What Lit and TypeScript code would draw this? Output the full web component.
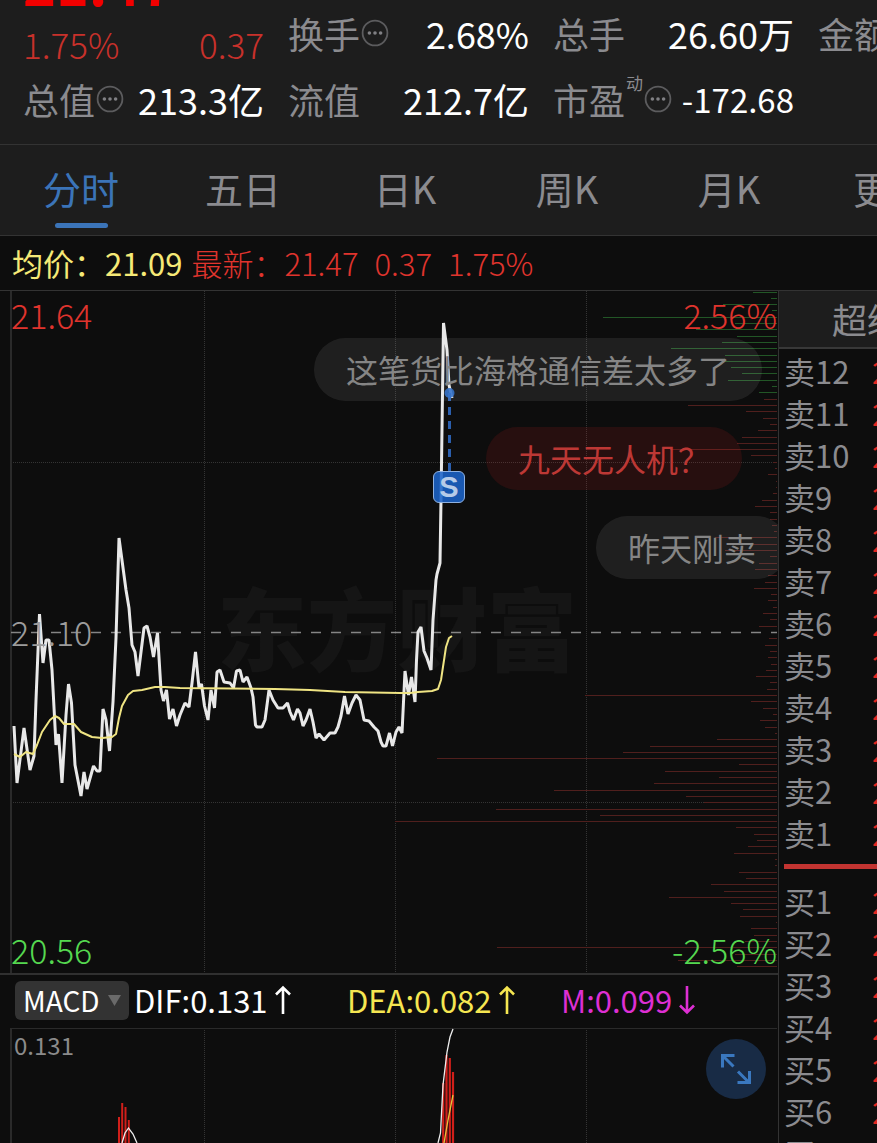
import { LitElement, html, svg, css } from "lit";
import { customElement, property, state } from "lit/decorators.js";
import { classMap } from "lit/directives/class-map.js";

type Point = [number, number];

const PRICE: Point[] = [
  [14, 726], [17, 783], [24, 728], [30, 770], [34, 756], [36, 700], [39.5, 614], [43, 663], [46, 640], [49, 640],
  [52, 670], [56, 745], [58.5, 734], [62, 783], [66, 715], [68.5, 684], [71.5, 703], [75, 765], [81, 796],
  [84, 772], [87, 789], [93.5, 766], [97, 771], [100, 771], [103, 709], [106, 720], [109.5, 751], [113, 702],
  [116, 638], [119, 538], [126, 590], [129, 608], [132, 645], [135, 652], [138, 676], [141, 652], [144, 628],
  [147, 626], [150, 637], [153.5, 657], [157.5, 633], [161, 690], [163.5, 701], [166.5, 690], [169.5, 719],
  [173, 709], [176.5, 726], [180, 715], [185, 703], [189, 707], [192, 683], [195.5, 652], [199, 688],
  [201.5, 684], [204.5, 706], [208, 720], [211, 690], [214.5, 708], [217, 672], [220, 670], [224, 682],
  [230, 683], [233.5, 688], [236.5, 671], [240, 670], [243, 682], [247, 677], [251, 688], [253, 697],
  [255.5, 725], [257, 727], [262, 727], [265, 720], [269, 690], [273, 700], [278, 708], [283, 708], [287.5, 703],
  [290, 712], [293.5, 720], [297.5, 709], [300, 713], [303, 726], [306, 720], [310, 709], [313, 722], [316, 738],
  [319, 734], [324, 740], [330, 733], [335, 733], [338, 727], [341, 716], [344.5, 696], [348, 714], [352, 703],
  [356, 695], [360, 700], [362, 710], [364, 720], [369, 721], [374, 727], [378, 731], [381, 742], [383, 746],
  [386, 746], [389.5, 733], [392.5, 746], [396, 732], [399, 727], [402, 733], [405, 671], [408.5, 695],
  [411.5, 677], [415, 702], [416.5, 660], [418, 632], [421, 627], [424, 651], [427, 658], [431, 670], [433, 620],
  [436, 580], [437, 574], [440, 563], [441, 500], [443.5, 323], [447, 350], [449, 385], [452, 398],
];

const AVERAGE: Point[] = [
  [14, 754], [20, 757], [26, 752], [33, 754], [37, 745], [42, 732], [50, 720], [55, 716], [59, 718], [64, 724],
  [74, 724], [81, 732], [92, 737], [102, 738], [112, 737], [116, 734], [119, 718], [122, 706], [128, 695],
  [133, 691], [142, 690], [155, 687], [165, 687], [180, 688], [275, 689], [310, 690], [345, 692], [400, 693],
  [410, 693], [418, 692], [432, 691], [438, 689], [441, 680], [446, 647], [449, 638], [452, 636],
];

/* Traded volume per price level, from the top of the chart down, as bar lengths. */
const VOLUME = [
  24, 6, 54, 5, 174, 42, 81, 40, 55, 106, 52, 52, 46, 35, 49, 5, 18, 13, 89, 31, 14, 7, 19, 35, 40, 107, 26, 4, 2, 9,
  1, 1, 4, 15, 22, 7, 7, 5, 3, 62, 37, 52, 7, 18, 22, 9, 12, 23, 6, 9, 4, 14, 7, 18, 5, 8, 12, 7, 9, 6, 11, 21, 7,
  10, 192, 26, 14, 4, 17, 12, 2, 60, 127, 154, 340, 38, 112, 58, 123, 223, 91, 73, 281, 177, 382, 41, 23, 20, 29,
  43, 2, 2, 38, 31, 66, 53, 108, 46, 34, 37, 1, 26, 23, 32, 280, 42, 99, 40, 81,
];
const GREEN_LEVELS = 17;

const path = (points: Point[]) => points.map((p) => p.join(",")).join(" ");

const infoIcon = html`<svg class="info" viewBox="0 0 28 28" aria-hidden="true">
  <circle cx="14" cy="14" r="12.4" fill="none" stroke="#5c5c5e" stroke-width="1.8" />
  <g fill="#808084"><circle cx="8.4" cy="14" r="1.8" /><circle cx="14" cy="14" r="1.8" /><circle cx="19.6" cy="14" r="1.8" /></g>
</svg>`;

@customElement("quote-header")
class QuoteHeader extends LitElement {
  static styles = css`
    :host {
      display: block;
      overflow: hidden;
      background: #1d1d1d;
      border-bottom: 1px solid #333;
    }
    .grid {
      display: grid;
      grid-template-columns: repeat(4, 241px);
      grid-template-rows: 67px 65px;
      column-gap: 24px;
      padding: 0 23px 12px;
    }
    .cell {
      display: flex;
      align-items: center;
      justify-content: space-between;
      padding-bottom: 2px;
      font-size: 36px;
      line-height: 48px;
      color: #fff;
      white-space: nowrap;
    }
    .label {
      display: flex;
      align-items: center;
      gap: 1px;
      color: #8b8b8f;
    }
    .last {
      display: flex;
      flex-direction: column;
      justify-content: flex-end;
      height: 67px;
      color: #c8312b;
    }
    .price {
      font-size: 56px;
      line-height: 78px;
      font-weight: 700;
      color: #f20000;
    }
    .change {
      display: flex;
      justify-content: space-between;
      font-size: 35px;
      line-height: 46px;
      font-weight: 300;
    }
    .note {
      align-self: flex-start;
      font-size: 17px;
      line-height: 16px;
    }
    .info {
      width: 28px;
      height: 28px;
    }
    .minor {
      font-size: 33px;
    }
  `;

  render() {
    return html`<div class="grid">
      <div class="last">
        <div class="price">21.47</div>
        <div class="change"><span>1.75%</span><span>0.37</span></div>
      </div>
      <div class="cell"><span class="label">换手${infoIcon}</span><span>2.68%</span></div>
      <div class="cell"><span class="label">总手</span><span>26.60万</span></div>
      <div class="cell"><span class="label">金额</span></div>
      <div class="cell"><span class="label">总值${infoIcon}</span><span>213.3亿</span></div>
      <div class="cell"><span class="label">流值</span><span>212.7亿</span></div>
      <div class="cell">
        <span class="label">市盈<span class="note">动</span>${infoIcon}</span><span class="minor">-172.68</span>
      </div>
    </div>`;
  }
}

@customElement("period-tabs")
class PeriodTabs extends LitElement {
  @state() active = 0;

  static styles = css`
    :host {
      display: block;
      overflow: hidden;
      background: #1d1d1d;
      border-bottom: 1px solid #333;
    }
    .tabs {
      display: flex;
    }
    .tab {
      flex: 0 0 162px;
      display: flex;
      flex-direction: column;
      align-items: center;
      height: 90px;
      padding: 15px 0 0;
      border: 0;
      background: none;
      font: inherit;
      font-size: 38px;
      line-height: 56px;
      color: #8b8b8f;
    }
    .tab::after {
      content: "";
      width: 53px;
      height: 5px;
      margin-top: 7px;
      border-radius: 3px;
    }
    .active {
      color: #3b74b8;
    }
    .active::after {
      background: #3b74b8;
    }
  `;

  render() {
    return html`<nav class="tabs">
      ${["分时", "五日", "日K", "周K", "月K", "更多"].map(
        (name, i) => html`<button class=${classMap({ tab: true, active: i === this.active })} @click=${() => (this.active = i)}>${name}</button>`
      )}
    </nav>`;
  }
}

@customElement("price-chart")
class PriceChart extends LitElement {
  static styles = css`
    :host {
      display: block;
      position: relative;
      overflow: hidden;
      min-height: 0;
    }
    .plot {
      position: absolute;
      inset: 0;
      width: 100%;
      height: 100%;
    }
    .plot * {
      vector-effect: non-scaling-stroke;
    }
    .watermark {
      position: absolute;
      left: 217px;
      top: 49%;
      transform: translateY(-50%);
      font-size: 90px;
      line-height: 90px;
      font-weight: 900;
      color: #151515;
      white-space: nowrap;
    }
    .scale {
      position: absolute;
      inset: 0 1px 1px 11px;
      display: grid;
      grid-template-columns: auto auto;
      grid-template-rows: 1fr auto 1fr;
      justify-content: space-between;
      font-size: 34px;
      line-height: 44px;
      font-weight: 300;
    }
    .up {
      padding-top: 2px;
      color: #e0342d;
    }
    .mid {
      grid-column: 1 / 3;
      color: #9c9c9c;
    }
    .down {
      align-self: end;
      color: #55d850;
    }
    .end {
      text-align: right;
    }
    .bullet {
      position: absolute;
      padding: 0 32px;
      border-radius: 32px;
      background: rgba(255, 255, 255, 0.08);
      font-size: 32px;
      line-height: 63px;
      color: #858585;
      white-space: nowrap;
    }
    .first {
      left: 314px;
      top: 47px;
    }
    .second {
      left: 486px;
      top: 136px;
      background: rgba(255, 40, 40, 0.11);
      color: #bd3835;
    }
    .third {
      left: 596px;
      top: 225px;
    }
    .sell {
      position: absolute;
      left: 57.7%;
      top: 180px;
      width: 32px;
      height: 32px;
      margin-left: -16px;
      box-sizing: border-box;
      border: 1px solid #8fb0de;
      border-radius: 6px;
      background: rgba(27, 99, 200, 0.88);
      font: 700 29px/30px "Liberation Sans", sans-serif;
      text-align: center;
      color: #b6cbe8;
    }
  `;

  render() {
    const step = 681 / (VOLUME.length - 1);
    return html`
      <div class="watermark">东方财富</div>
      <svg class="plot" viewBox="0 291 778 682" preserveAspectRatio="none" aria-hidden="true">
        <g stroke="#343434" stroke-dasharray="1 1" fill="none">
          <path d="M204.5 291V973M395.5 291V973M586.5 291V973M11 462.500H777M11 802.5H777" />
        </g>
        <path d="M11 291V973" stroke="#2a2a2a" stroke-width="2" />
        ${VOLUME.map((length, i) => {
          const y = Math.round(291.5 + step * i) + 0.5;
          return svg`<path d=${`M${777 - length} ${y}H777`} stroke=${i < GREEN_LEVELS ? "#225626" : "#501f1d"} />`;
        })}
        <path d="M11 632.5H777" stroke="#858585" stroke-width="1.6" stroke-dasharray="10 10" />
        <polyline points=${path(PRICE)} fill="none" stroke="#e8e8e8" stroke-width="3" stroke-linejoin="bevel" />
        <polyline points=${path(AVERAGE)} fill="none" stroke="#efe483" stroke-width="2" stroke-linejoin="round" />
        <path d="M449.5 393V471" stroke="#2b5fae" stroke-width="3" stroke-dasharray="8 6" />
        <circle cx="449.5" cy="393" r="5" fill="#2668c4" fill-opacity="0.9" />
      </svg>
      <div class="scale">
        <span class="up">21.64</span><span class="up end">2.56%</span>
        <span class="mid">21.10</span>
        <span class="down">20.56</span><span class="down end">-2.56%</span>
      </div>
      <div class="bullet first">这笔货比海格通信差太多了</div>
      <div class="bullet second">九天无人机？</div>
      <div class="bullet third">昨天刚卖</div>
      <div class="sell">S</div>
    `;
  }
}

@customElement("macd-chart")
class MacdChart extends LitElement {
  static styles = css`
    :host {
      display: flex;
      flex-direction: column;
      min-height: 0;
      border-top: 2px solid #303030;
      box-sizing: border-box;
    }
    .bar {
      flex: none;
      display: grid;
      grid-template-columns: 119px 213px 214px auto;
      align-items: center;
      height: 50px;
      padding: 0 0 3px 15px;
      font-size: 31px;
      line-height: 40px;
      white-space: nowrap;
    }
    .picker {
      display: flex;
      align-items: center;
      justify-content: space-between;
      width: 114px;
      height: 39px;
      padding: 0 8px;
      border: 0;
      border-radius: 6px;
      background: #333;
      font: inherit;
      font-size: 28px;
      line-height: 36px;
      color: #fff;
    }
    .caret {
      width: 13px;
      height: 11px;
      fill: #6a6a6a;
    }
    .value {
      display: flex;
      align-items: center;
      gap: 6px;
    }
    .arrow {
      width: 18px;
      height: 30px;
      fill: none;
      stroke: currentColor;
      stroke-width: 2.6;
    }
    .dif {
      color: #fff;
    }
    .dea {
      color: #f5e651;
    }
    .m {
      color: #dd2fd3;
    }
    .area {
      flex: 1;
      position: relative;
      min-height: 0;
      overflow: hidden;
    }
    .plot {
      position: absolute;
      inset: 0;
      width: 100%;
      height: 100%;
    }
    .plot * {
      vector-effect: non-scaling-stroke;
    }
    .max {
      position: absolute;
      left: 14px;
      top: 0;
      font-size: 24px;
      line-height: 34px;
      color: #8b8b8b;
    }
    .expand {
      position: absolute;
      right: 12px;
      top: 11px;
      width: 60px;
      height: 60px;
      padding: 0;
      border: 0;
      border-radius: 50%;
      background: #182b45;
    }
    .glyph {
      display: block;
      width: 60px;
      height: 60px;
      fill: none;
      stroke: #3a78bf;
      stroke-width: 3;
    }
  `;

  private arrow(down: boolean) {
    return html`<svg class="arrow" viewBox="0 0 18 30" aria-hidden="true">
      <path d=${down ? "M9 1V28M2 20.5L9 27.5L16 20.5" : "M9 29V2M2 9.500L9 2.5L16 9.500"} />
    </svg>`;
  }

  render() {
    return html`
      <div class="bar">
        <button class="picker">MACD<svg class="caret" viewBox="0 0 13 11" aria-hidden="true"><path d="M0 0H13L6.500 11Z" /></svg></button>
        <span class="value dif">DIF:0.131${this.arrow(false)}</span>
        <span class="value dea">DEA:0.082${this.arrow(false)}</span>
        <span class="value m">M:0.099${this.arrow(true)}</span>
      </div>
      <div class="area">
        <svg class="plot" viewBox="0 1028 778 115" preserveAspectRatio="none" aria-hidden="true">
          <path d="M204.5 1028V1143M395.5 1028V1143M586.5 1028V1143" stroke="#343434" stroke-dasharray="1 1" />
          <path d="M11 1028V1143" stroke="#2a2a2a" stroke-width="2" />
          <path d="M10 1028.5H777" stroke="#2a2a2a" />
          <path d="M119 1143V1117M122.2 1143V1103M125.500 1143V1107M128.800 1143V1120" stroke="#d01f1a" stroke-width="2" />
          <path d="M443.2 1143V1083M446.500 1143V1055M449.800 1143V1058M453 1143V1072" stroke="#d01f1a" stroke-width="2.2" />
          <polyline points="122,1143 125,1133 128.500,1128 133,1134 137,1143" fill="none" stroke="#eee" stroke-width="1.300" />
          <polyline points="438,1143 440.500,1133 443,1085 447,1052 450,1037 453,1029" fill="none" stroke="#eee" stroke-width="1.300" />
          <polyline points="444,1143 448,1120 453,1095" fill="none" stroke="#e8c23c" stroke-width="1.300" />
        </svg>
        <div class="max">0.131</div>
        <button class="expand" aria-label="全屏">
          <svg class="glyph" viewBox="0 0 60 60"><path d="M28.500 16.500H16.500V28.500M17 17L27.500 27.500M32 32.500L43 43.500M43.500 32V43.500H31.500" /></svg>
        </button>
      </div>
    `;
  }
}

@customElement("order-book")
class OrderBook extends LitElement {
  static styles = css`
    :host {
      display: block;
      overflow: hidden;
      border-left: 1px solid #333;
    }
    .title {
      display: block;
      width: 176px;
      height: 56px;
      border: 0;
      border-bottom: 2px solid #383838;
      box-sizing: content-box;
      padding: 0;
      background: #1d1d1d;
      font: inherit;
      font-size: 35px;
      line-height: 52px;
      color: #8b8b8f;
    }
    .book {
      border-collapse: collapse;
      margin: 1px 0 10px 5px;
      font-size: 31px;
      line-height: 42px;
      white-space: nowrap;
    }
    .book td,
    .book th {
      padding: 0;
      height: 42px;
      text-align: left;
      font-weight: inherit;
    }
    .book th {
      min-width: 88px;
      width: 88px;
      color: #8b8b8f;
    }
    .quote {
      color: #e0251f;
    }
    .divider {
      height: 5px;
      margin: 0 0 11px 5px;
      background: #c23431;
    }
  `;

  @property({ attribute: false }) asks: string[][] = Array.from({ length: 12 }, (_, i) => [`卖${12 - i}`, (21.59 - i / 100).toFixed(2)]);
  @property({ attribute: false }) bids: string[][] = Array.from({ length: 7 }, (_, i) => [`买${i + 1}`, (21.47 - i / 100).toFixed(2)]);

  private table(rows: string[][]) {
    return html`<table class="book">
      <tbody>
        ${rows.map(([name, price]) => html`<tr><th scope="row">${name}</th><td class="quote">${price}</td></tr>`)}
      </tbody>
    </table>`;
  }

  render() {
    return html`<button class="title">超级</button>${this.table(this.asks)}
      <div class="divider"></div>
      ${this.table(this.bids)}`;
  }
}

@customElement("app-root")
class AppRoot extends LitElement {
  static styles = css`
    :host {
      display: flex;
      flex-direction: column;
      height: 100vh;
      overflow: hidden;
      background: #0d0d0d;
      font-family: "Noto Sans CJK SC", "Noto Sans", sans-serif;
      font-weight: 400;
    }
    .summary {
      display: flex;
      flex: none;
      align-items: center;
      height: 54px;
      padding: 0 12px;
      border-bottom: 1px solid #333;
      font-size: 31px;
      line-height: 44px;
      font-weight: 300;
      color: #e0342d;
      white-space: nowrap;
    }
    .average {
      margin-right: 9px;
      font-weight: 400;
      color: #f5e976;
    }
    .delta {
      margin-left: 16px;
    }
    .main {
      flex: 1;
      display: grid;
      grid-template-columns: minmax(0, 1fr) 99px;
      min-height: 0;
    }
    .charts {
      display: grid;
      grid-template-rows: minmax(0, 682fr) minmax(0, 170fr);
      min-height: 0;
    }
  `;

  render() {
    return html`
      <quote-header></quote-header>
      <period-tabs></period-tabs>
      <div class="summary">
        <span class="average">均价：21.09</span><span>最新：21.47</span>
        <span class="delta">0.37</span><span class="delta">1.75%</span>
      </div>
      <div class="main">
        <div class="charts">
          <price-chart></price-chart>
          <macd-chart></macd-chart>
        </div>
        <order-book></order-book>
      </div>
    `;
  }
}
